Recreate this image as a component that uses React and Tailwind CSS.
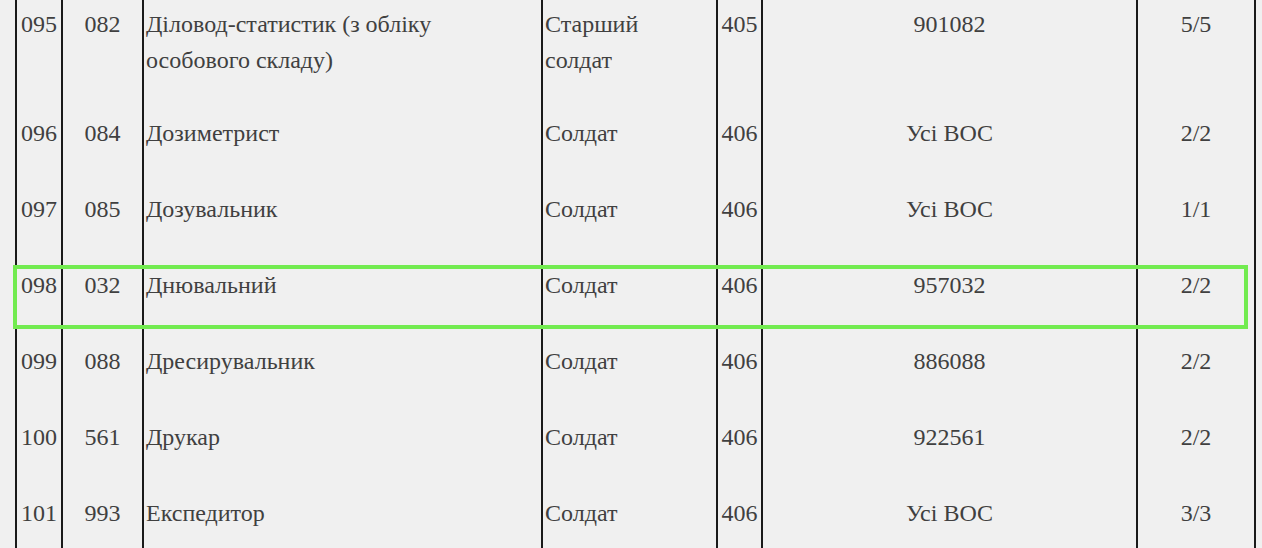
import React from 'react';

const rows = [
  { n: '095', code: '082', title: <>Діловод-статистик (з обліку<br />особового складу)</>, rank: <>Старший<br />солдат</>, cat: '405', voc: '901082', qty: '5/5', pb: 'pb-[31px]' },
  { n: '096', code: '084', title: 'Дозиметрист', rank: 'Солдат', cat: '406', voc: 'Усі ВОС', qty: '2/2' },
  { n: '097', code: '085', title: 'Дозувальник', rank: 'Солдат', cat: '406', voc: 'Усі ВОС', qty: '1/1' },
  { n: '098', code: '032', title: 'Днювальний', rank: 'Солдат', cat: '406', voc: '957032', qty: '2/2' },
  { n: '099', code: '088', title: 'Дресирувальник', rank: 'Солдат', cat: '406', voc: '886088', qty: '2/2' },
  { n: '100', code: '561', title: 'Друкар', rank: 'Солдат', cat: '406', voc: '922561', qty: '2/2' },
  { n: '101', code: '993', title: 'Експедитор', rank: 'Солдат', cat: '406', voc: 'Усі ВОС', qty: '3/3' },
];

const Cell = ({ children, className = '', pb }) => (
  <td className={`align-top border-x-2 border-[#1a1a1a] pt-[6px] px-[2px] ${pb || 'pb-[34px]'} ${className}`}>
    {children}
  </td>
);

export default function App() {
  return (
    <div className="relative w-[1262px] h-[548px] overflow-hidden bg-[#f0f0f0] font-['Liberation_Serif','Times_New_Roman',serif]">
      <table className="ml-[15px] w-[1239px] table-fixed border-collapse text-[24px] leading-[36px] text-[#404040]">
        <colgroup>
          <col className="w-[46px]" />
          <col className="w-[81px]" />
          <col className="w-[399px]" />
          <col className="w-[175px]" />
          <col className="w-[45px]" />
          <col className="w-[375px]" />
          <col className="w-[118px]" />
        </colgroup>
        <tbody>
          {rows.map((r) => (
            <tr key={r.n}>
              <Cell pb={r.pb} className="text-center">{r.n}</Cell>
              <Cell pb={r.pb} className="text-center">{r.code}</Cell>
              <Cell pb={r.pb}>{r.title}</Cell>
              <Cell pb={r.pb}>{r.rank}</Cell>
              <Cell pb={r.pb} className="text-center">{r.cat}</Cell>
              <Cell pb={r.pb} className="text-center">{r.voc}</Cell>
              <Cell pb={r.pb} className="text-center">{r.qty}</Cell>
            </tr>
          ))}
        </tbody>
      </table>

      {/* highlight over row 098 */}
      <div className="absolute left-[13px] top-[265px] w-[1235px] h-[64px] border-4 border-[#72eb50] pointer-events-none" />
    </div>
  );
}
